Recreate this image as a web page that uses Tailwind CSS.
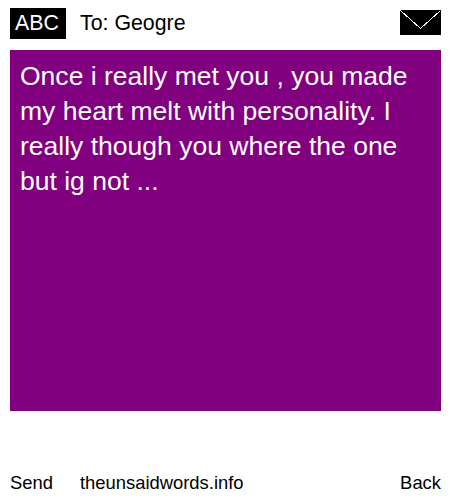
<!DOCTYPE html>
<html lang="en">
<head>
    <meta charset="UTF-8">
    <meta name="viewport" content="width=device-width, initial-scale=1.0">
    <title>The Unsaid Words</title>
    <script src="https://cdn.jsdelivr.net/npm/@tailwindcss/browser@4"></script>
</head>
<body class="bg-white text-black font-['Liberation_Sans',Arial,sans-serif] w-[450px] h-[500px] overflow-hidden">
    <div class="flex flex-col h-[500px] pl-[10px] pr-[9px]">
        <!-- header -->
        <div class="flex items-start h-[50px] pt-[8px]">
            <div class="w-[56px] h-[31px] bg-black text-white text-[21.33px] leading-[31px] text-center pr-[2px]">ABC</div>
            <div class="ml-[14px] text-[21.33px] leading-[31px]">To: Geogre</div>
            <svg class="ml-auto mt-[2px]" width="41" height="25" viewBox="0 0 41 25" shape-rendering="crispEdges">
                <rect width="41" height="25" fill="#000"/>
                <path d="M0.5 0.5L20.5 18.5L40.5 0.5" fill="none" stroke="#fff" stroke-width="1"/>
            </svg>
        </div>
        <!-- message -->
        <div class="h-[361px] bg-[#800080] text-white text-[26.53px] leading-[35px] px-[10px] py-[9px]">
            Once i really met you , you made my heart melt with personality. I really though you where the one but ig not ...
        </div>
        <!-- footer -->
        <div class="flex items-center mt-auto h-[26px] mb-[4px] text-[18.4px] leading-[26px]">
            <span>Send</span>
            <span class="ml-[27px]">theunsaidwords.info</span>
            <span class="ml-auto">Back</span>
        </div>
    </div>
</body>
</html>
